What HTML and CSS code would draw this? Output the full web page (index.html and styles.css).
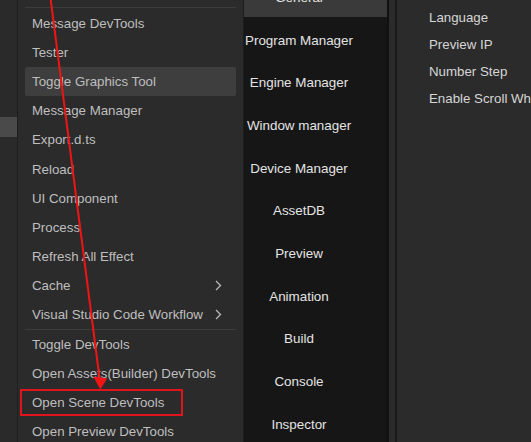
FILE: index.html
```html
<!DOCTYPE html>
<html>
<head>
<meta charset="utf-8">
<link rel="stylesheet" href="styles.css">
</head>
<body>
<div class="screen">
  <div class="left-strip"><div class="strip-item"></div></div>
  <div class="menu">
    <div class="menu-sep"></div>
    <div class="menu-item">Message DevTools</div>
    <div class="menu-item">Tester</div>
    <div class="menu-item active">Toggle Graphics Tool</div>
    <div class="menu-item">Message Manager</div>
    <div class="menu-item">Export.d.ts</div>
    <div class="menu-item">Reload</div>
    <div class="menu-item">UI Component</div>
    <div class="menu-item">Process</div>
    <div class="menu-item">Refresh All Effect</div>
    <div class="menu-item">Cache<svg class="chev" width="7" height="11" viewBox="0 0 7 11"><path d="M1 1 L5.5 5.5 L1 10" fill="none" stroke="#b8b8b8" stroke-width="1.3"/></svg></div>
    <div class="menu-item">Visual Studio Code Workflow<svg class="chev" width="7" height="11" viewBox="0 0 7 11"><path d="M1 1 L5.5 5.5 L1 10" fill="none" stroke="#b8b8b8" stroke-width="1.3"/></svg></div>
    <div class="menu-sep mid"></div>
    <div class="menu-item">Toggle DevTools</div>
    <div class="menu-item">Open Assets(Builder) DevTools</div>
    <div class="menu-item">Open Scene DevTools</div>
    <div class="menu-item">Open Preview DevTools</div>
  </div>
  <div class="sidebar">
    <div class="side-list">
      <div class="side-item selected">General</div>
      <div class="side-item">Program Manager</div>
      <div class="side-item">Engine Manager</div>
      <div class="side-item">Window manager</div>
      <div class="side-item">Device Manager</div>
      <div class="side-item">AssetDB</div>
      <div class="side-item">Preview</div>
      <div class="side-item">Animation</div>
      <div class="side-item">Build</div>
      <div class="side-item">Console</div>
      <div class="side-item">Inspector</div>
    </div>
  </div>
  <div class="divider"></div>
  <div class="panel">
    <div class="prop">Language</div>
    <div class="prop">Preview IP</div>
    <div class="prop">Number Step</div>
    <div class="prop">Enable Scroll Wheel</div>
  </div>
  <svg class="annot" width="531" height="442" viewBox="0 0 531 442">
    <line x1="50.5" y1="-2" x2="99.8" y2="380" stroke="#f01414" stroke-width="2"/>
    <polygon points="100.3,389.5 93.3,376.5 107.3,378.5" fill="#f01414"/>
  </svg>
  <div class="redbox"></div>
</div>
</body>
</html>
```

FILE: styles.css
```css
* { box-sizing: border-box; }
html, body { margin: 0; padding: 0; background: #2a2a2a; }
.screen {
  position: relative;
  display: flex;
  width: 531px;
  height: 442px;
  overflow: hidden;
  font-family: "Liberation Sans", Arial, sans-serif;
  font-size: 13.3px;
}
.left-strip {
  width: 18px;
  flex: none;
  background: #2a2a2a;
  border-right: 1px solid #1f1f1f;
}
.strip-item {
  margin-top: 117px;
  height: 20px;
  width: 17px;
  background: #4a4a4a;
}
.menu {
  width: 225px;
  flex: none;
  background: #2b2b2b;
  padding: 7px 7px 0 7px;
}
.menu-sep {
  height: 1px;
  background: #3d3d3d;
  margin-bottom: 1px;
}
.menu-sep.mid { margin-top: 0; margin-bottom: 0; }
.menu-item {
  height: 29.1px;
  display: flex;
  align-items: center;
  justify-content: space-between;
  padding: 0 14px 0 7px;
  color: #bfbfbf;
  white-space: nowrap;
  border-radius: 2px;
}
.menu-item.active { background: #3e3e3e; }
.chev { display: block; }
.sidebar {
  width: 144px;
  flex: none;
  background: #161616;
  border-left: 1px solid #1c1c1c;
}
.side-list { margin-top: -25.67px; }
.side-item {
  height: 42.67px;
  display: flex;
  align-items: center;
  justify-content: center;
  padding: 4px 33px 0 0;
  color: #e4e4e4;
  font-size: 13.4px;
  white-space: nowrap;
}
.side-item.selected { background: #3a3a3a; }
.divider {
  width: 10px;
  flex: none;
  background: #2b2b2b;
  border-left: 2px solid #111111;
  border-right: 2px solid #1a1a1a;
}
.panel {
  flex: 1;
  background: #2b2b2b;
  padding: 4px 0 0 32px;
  overflow: hidden;
}
.prop {
  height: 27px;
  display: flex;
  align-items: center;
  color: #d6d6d6;
  white-space: nowrap;
}
.annot {
  position: absolute;
  left: 0;
  top: 0;
  pointer-events: none;
}
.redbox {
  position: absolute;
  left: 20px;
  top: 389px;
  width: 163px;
  height: 27px;
  border: 2px solid #e0141c;
}
```
